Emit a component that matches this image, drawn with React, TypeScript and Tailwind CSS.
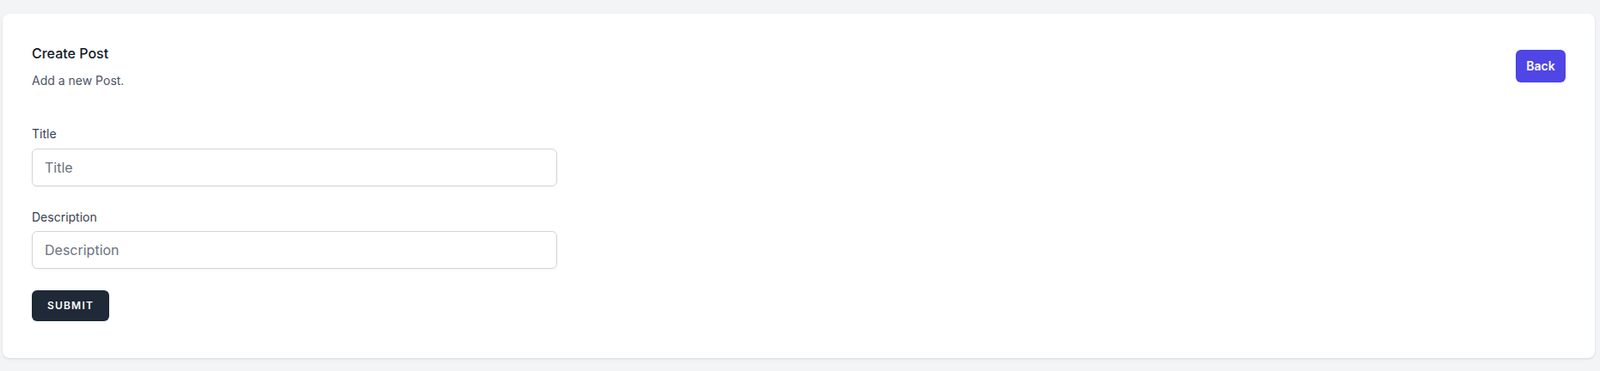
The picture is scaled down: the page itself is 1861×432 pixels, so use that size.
import React from "react";

export default function App() {
  return (
    <div
      className="min-h-[432px] bg-[#f3f4f6] pt-[16px] pl-[3px] pr-[6px] pb-[15px]"
      style={{ fontFamily: "Inter, 'Noto Sans', sans-serif" }}
    >
      <div className="rounded-lg bg-white shadow-sm px-[34px] pt-[34px] pb-[43px]">
        <div className="flex items-center justify-between">
          <div>
            <h2 className="text-base leading-6 font-medium text-[#111827]">Create Post</h2>
            <p className="mt-[10px] text-sm leading-5 text-[#4b5563]">Add a new Post.</p>
          </div>
          <button className="h-[38px] w-[58px] rounded-md bg-[#4f46e5] text-sm font-semibold text-white">
            Back
          </button>
        </div>

        <form className="mt-[42px] w-[611px]">
          <div>
            <label className="block text-sm leading-5 font-normal text-[#374151]">Title</label>
            <input
              type="text"
              placeholder="Title"
              className="mt-[7px] block h-[44px] w-full rounded-md border border-[#d1d5db] px-[14px] text-base text-[#111827] shadow-xs placeholder:text-[#6b7280] outline-none"
            />
          </div>
          <div className="mt-[26px]">
            <label className="block text-sm leading-5 font-normal text-[#374151]">Description</label>
            <input
              type="text"
              placeholder="Description"
              className="mt-[6px] block h-[44px] w-full rounded-md border border-[#d1d5db] px-[14px] text-base text-[#111827] shadow-xs placeholder:text-[#6b7280] outline-none"
            />
          </div>
          <button
            type="button"
            className="mt-[25px] h-[36px] w-[90px] rounded-md bg-[#1f2937] text-xs font-semibold uppercase tracking-widest text-white"
          >
            Submit
          </button>
        </form>
      </div>
    </div>
  );
}
